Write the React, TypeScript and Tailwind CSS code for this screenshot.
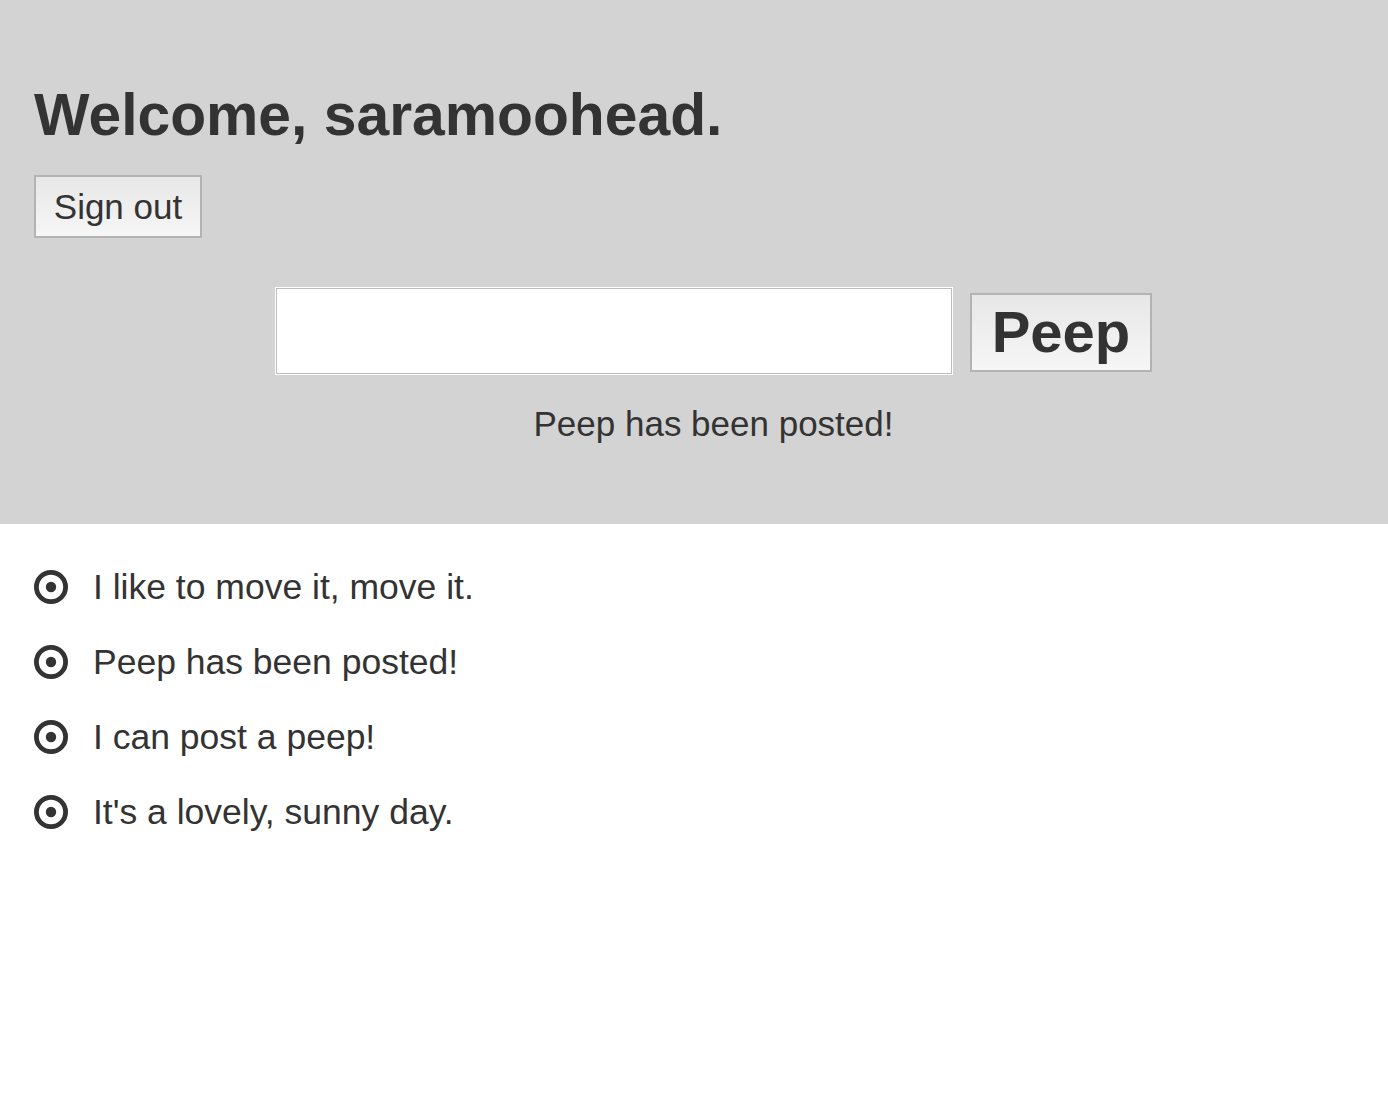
import React from "react";

const peeps = [
  "I like to move it, move it.",
  "Peep has been posted!",
  "I can post a peep!",
  "It's a lovely, sunny day.",
];

function Target() {
  return (
    <svg width="34" height="34" viewBox="0 0 34 34" className="shrink-0">
      <circle cx="17" cy="17" r="14.6" fill="none" stroke="#333333" strokeWidth="4.8" />
      <circle cx="17" cy="17" r="5.2" fill="#333333" />
    </svg>
  );
}

export default function App() {
  return (
    <div
      className="min-h-[1104px] bg-white text-[#333333]"
      style={{ fontFamily: '"Liberation Sans", Arial, sans-serif' }}
    >
      <header className="bg-[#d3d3d3] pt-[86px] pb-[83px]">
        <div className="pl-[34px]">
          <h1 className="text-[58.8px] font-bold leading-none">
            Welcome, saramoohead.
          </h1>
          <button className="mt-[30px] flex h-[63px] w-[168px] items-center justify-center border-2 border-[#b3b3b3] bg-gradient-to-b from-[#e7e7e7] to-[#f6f6f6] text-[35px] leading-none text-[#333333]">
            Sign out
          </button>
        </div>
        <div className="pl-[39px]">
          <div className="mt-[49px] flex items-start justify-center gap-[17px]">
            <div className="h-[88px] w-[678px] border border-white">
              <input
                type="text"
                className="h-full w-full border border-[#bdbdbd] bg-white outline-none"
              />
            </div>
            <button className="mt-[6px] flex h-[79px] w-[182px] items-center justify-center border-2 border-[#b3b3b3] bg-gradient-to-b from-[#e7e7e7] to-[#f6f6f6] text-[58px] font-bold leading-none text-[#333333]">
              Peep
            </button>
          </div>
          <p className="mt-[31px] text-center text-[35px] leading-[35px]">
            Peep has been posted!
          </p>
        </div>
      </header>
      <ul className="mt-[26px] pl-[34px]">
        {peeps.map((p) => (
          <li key={p} className="flex h-[75px] items-center gap-[25px]">
            <Target />
            <span className="text-[35.5px] leading-none">{p}</span>
          </li>
        ))}
      </ul>
    </div>
  );
}
